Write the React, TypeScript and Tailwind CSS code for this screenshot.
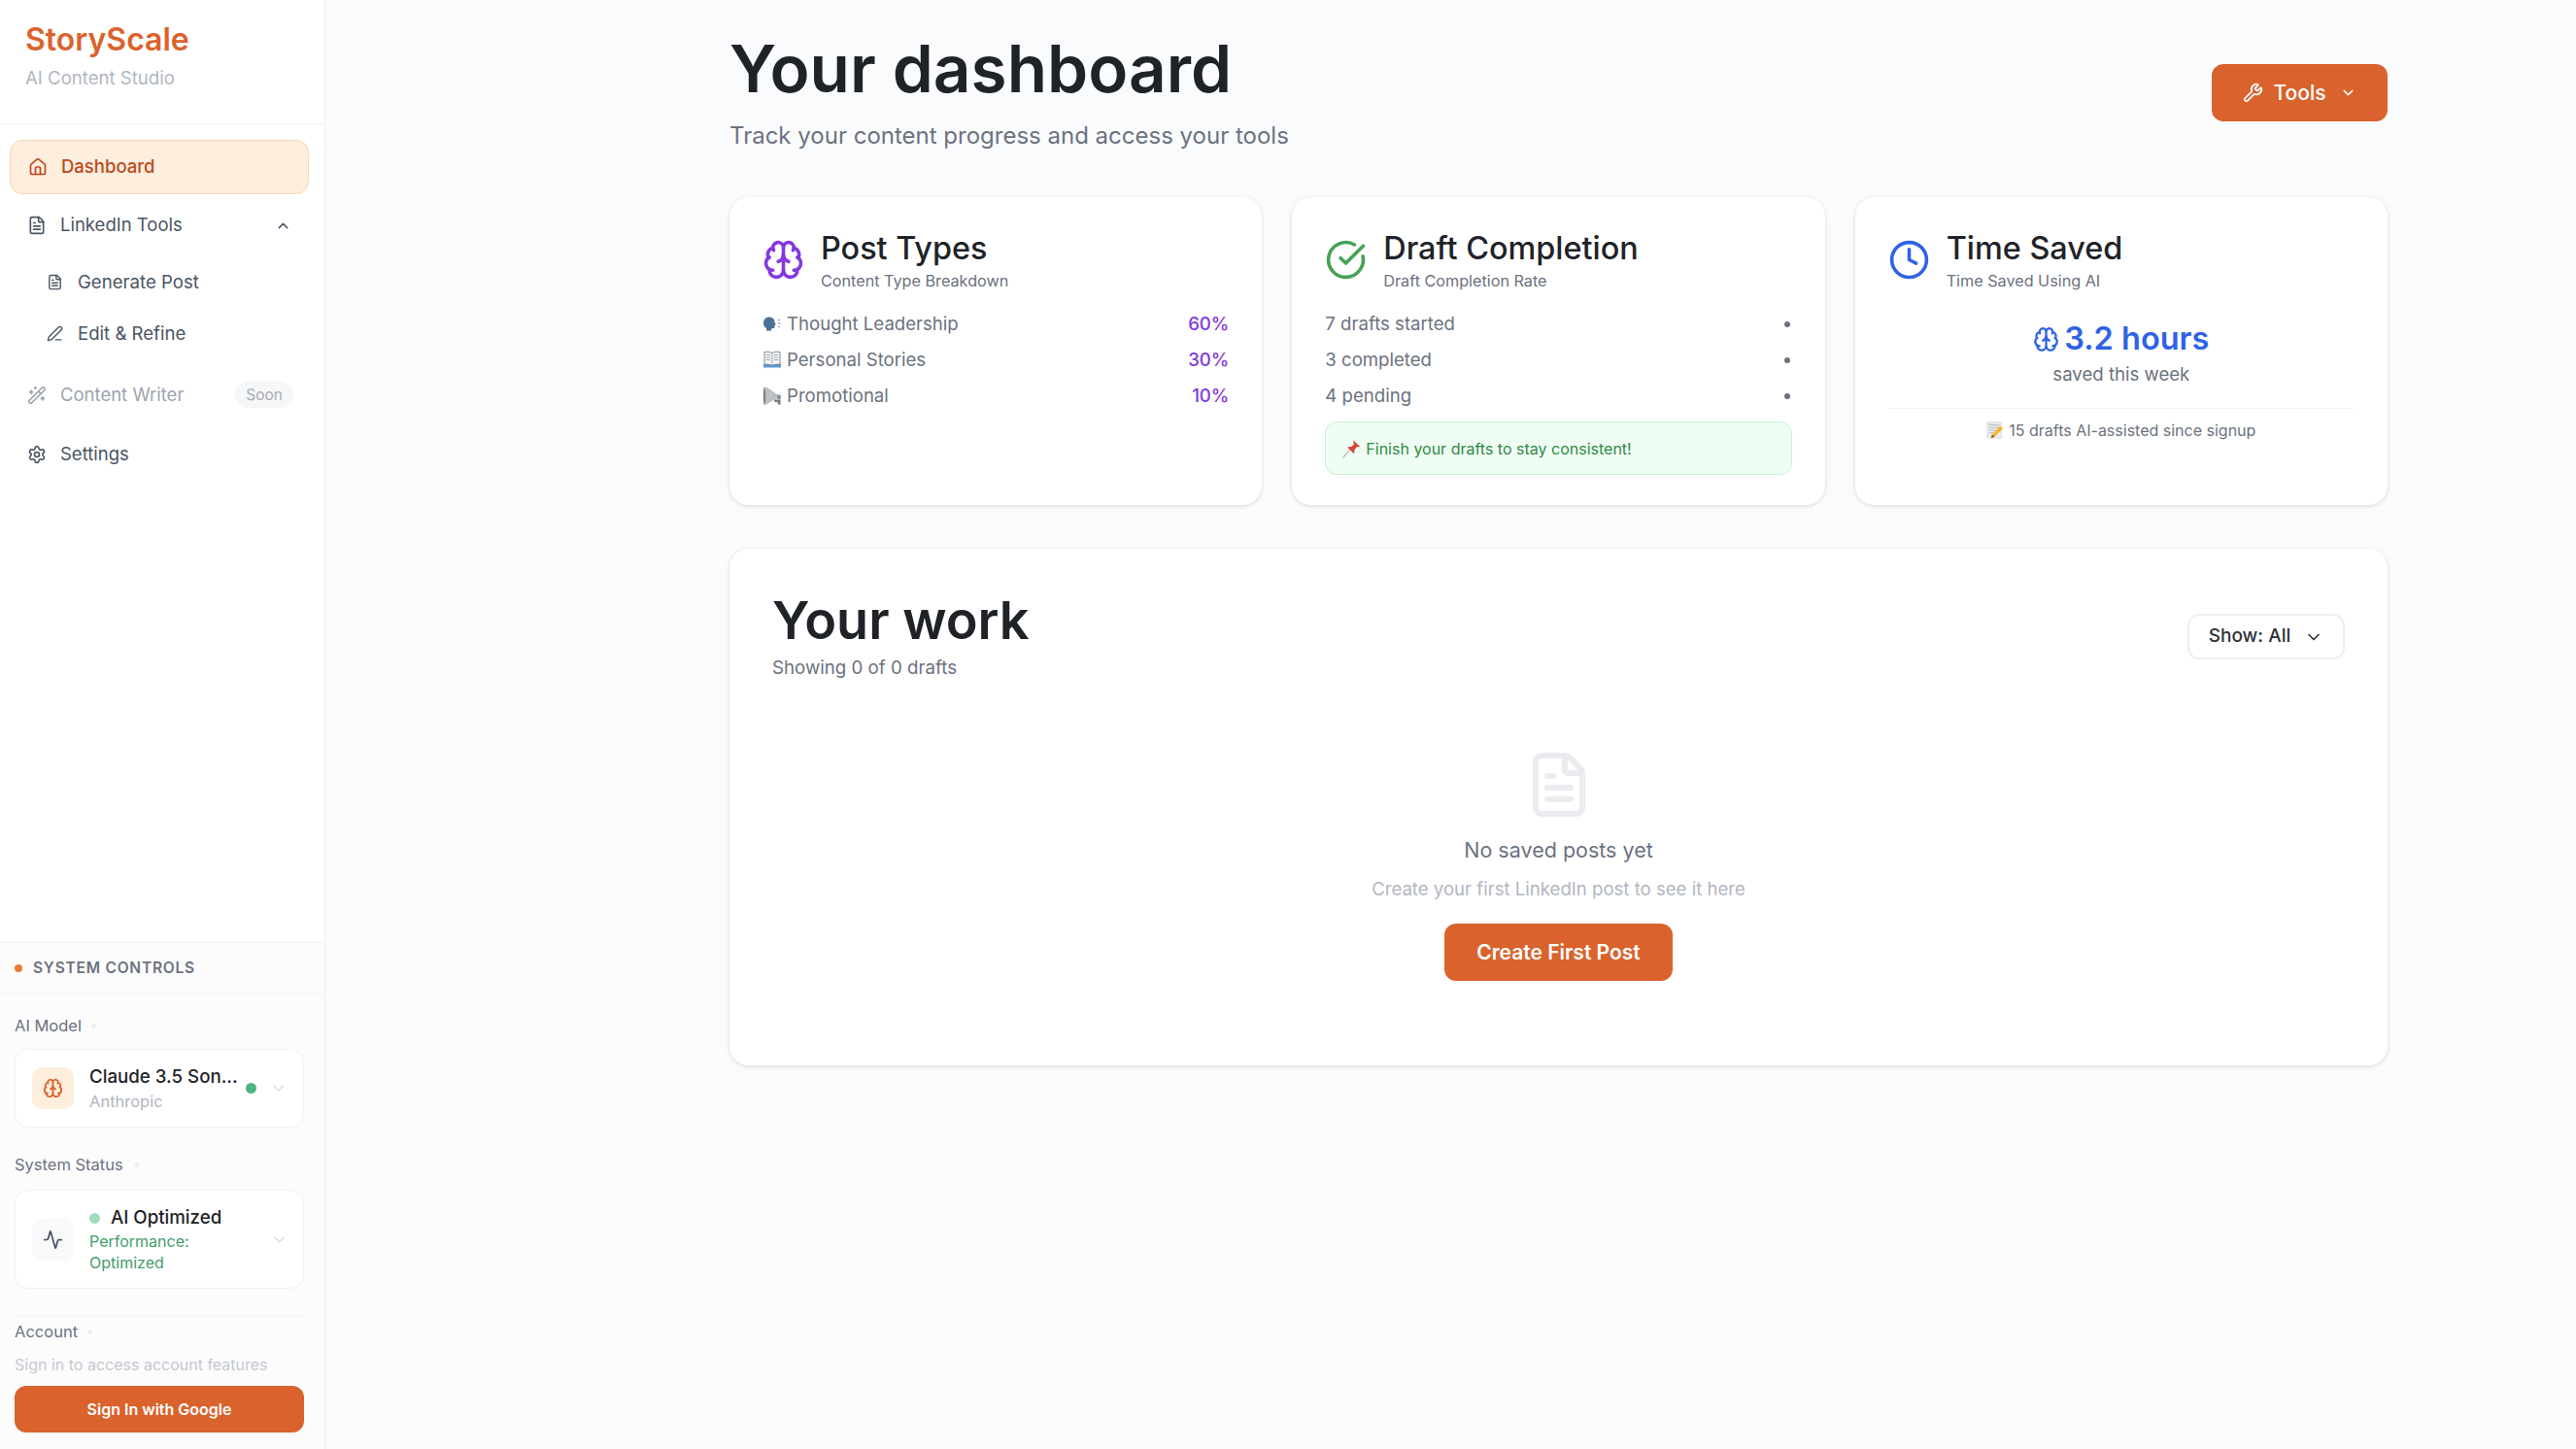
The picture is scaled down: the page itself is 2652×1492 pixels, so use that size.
import { Activity, Brain, ChevronDown, ChevronUp, CircleCheckBig, Clock, FileText, House, PenLine, Settings, WandSparkles, Wrench } from 'lucide-react'

function SpeakingHead() {
  return (
    <svg viewBox="0 0 20 20" className="w-[20px] h-[20px] shrink-0">
      <path d="M1 9.5C1 5.6 3.8 3.5 7 3.5c3.2 0 5.5 2.200 5.500 5.200l1.400 2.600-1.400.5v2c0 1-.8 1.400-1.700 1.400H9l.2 2.300H4V15C2 13.800 1 12 1 9.500Z" fill="#4d7196" />
      <path d="M16 7l1.600-1M16.300 10h2M16 13l1.600 1" stroke="#7d8c9c" strokeWidth="1" strokeLinecap="round" />
    </svg>
  )
}

function OpenBook() {
  return (
    <svg viewBox="0 0 20 20" className="w-[20px] h-[20px] shrink-0">
      <path d="M1 15h18v3.500H1z" fill="#5b9bd5" />
      <path d="M2 2.500c3-.6 6-.4 8 1 2-1.400 5-1.600 8-1V15.500c-3-.6-6-.4-8 1-2-1.400-5-1.600-8-1Z" fill="#f4f5f6" stroke="#5f6b78" strokeWidth=".8" />
      <path d="M10 3.500V16.500M3.800 5.500c1.500-.2 3-.1 4.400.4M3.800 8c1.500-.2 3-.1 4.400.4M3.800 10.500c1.500-.2 3-.1 4.400.4M11.800 5.900c1.400-.5 2.900-.6 4.400-.4M11.800 8.400c1.400-.5 2.900-.6 4.400-.4M11.800 10.900c1.400-.5 2.900-.6 4.400-.4" stroke="#7b8693" strokeWidth=".7" fill="none" />
    </svg>
  )
}

function Megaphone() {
  return (
    <svg viewBox="0 0 20 20" className="w-[20px] h-[21px] shrink-0">
      <path d="M1.500 1.500 4 1l11 7.500v4L3 19.500l-1.500-.5Z" fill="#bcbfc3" />
      <path d="M1.500 1.500C.5 5 .5 16 1.500 19c1.300-.5 1.800-4.500 1.800-8.500S2.700 2 1.500 1.500Z" fill="#7f8387" />
      <path d="M15 9h3l1 1.500v2l-1 1h-3Z" fill="#8d9196" />
      <path d="M12 14l6.500 0v5H16l-.5-2.500h-3Z" fill="#777b80" />
    </svg>
  )
}

function Pushpin() {
  return (
    <svg viewBox="0 0 20 20" className="w-[19px] h-[20px] shrink-0">
      <path d="M1 19.500l6.500-7.500" stroke="#8a8f95" strokeWidth="1" strokeLinecap="round" />
      <path d="M12 1l7 6.500-2 1-1.200-.7-3 3.700c.7 1.500.4 2.800-.6 3.800L5.500 8.700c1.100-1 2.500-1.200 3.900-.5l3.300-3.100-.7-1.300Z" fill="#d9443f" />
    </svg>
  )
}

function Memo() {
  return (
    <svg viewBox="0 0 20 20" className="w-[18px] h-[20px] shrink-0">
      <path d="M1 1h16v18H1z" fill="#eceded" stroke="#c4c6c8" strokeWidth=".6" />
      <path d="M3 4h12M3 7h12M3 10h8M3 13h5" stroke="#a8abae" strokeWidth=".9" />
      <path d="M15.500 5 19 8 9.500 17.500 5.500 19l1-4Z" fill="#f2b632" />
      <path d="M5.500 19l1-4 3 2.500Z" fill="#7a5b36" />
    </svg>
  )
}

function StatRow({ left, right, icon }: { left: string; right: React.ReactNode; icon?: React.ReactNode }) {
  return (
    <div className="flex items-center justify-between h-[37px] text-[18.6px] text-[#6b7280]">
      <span className="flex items-center gap-[5px]">
        {icon}
        {left}
      </span>
      {right}
    </div>
  )
}

function StatCard({ icon, title, sub, children }: { icon: React.ReactNode; title: string; sub: string; children: React.ReactNode }) {
  return (
    <div className="flex-1 h-[317px] bg-white rounded-[20px] px-[34px] pt-[30px] shadow-[0_1px_4px_rgba(0,0,0,0.14)]">
      <div className="flex items-start gap-[17px]">
        <div className="pt-[13px]">{icon}</div>
        <div>
          <div className="text-[32.4px] leading-[46px] font-medium text-[#1f2328]">{title}</div>
          <div className="text-[16.2px] leading-[21px] text-[#6b7280]">{sub}</div>
        </div>
      </div>
      <div className="mt-[15px]">{children}</div>
    </div>
  )
}

const Dot = () => <span className="w-[6px] h-[6px] rounded-full bg-[#6b7280] mr-[2px]" />
const Pct = ({ v }: { v: string }) => <span className="font-medium text-[#8338e0]">{v}</span>

export default function App() {
  return (
    <div className="flex h-screen w-full overflow-hidden bg-[#fafbfd] font-['Inter',sans-serif]">
      {/* Sidebar */}
      <aside className="w-[335px] shrink-0 h-full flex flex-col bg-white border-r border-[#f1f2f4]">
        <div className="h-[128px] shrink-0 border-b border-[#f1f2f4] pl-[26px] pt-[20px]">
          <div className="text-[32px] leading-[42px] font-semibold text-[#da622c]">StoryScale</div>
          <div className="mt-[3px] text-[18.6px] leading-[30px] text-[#b0b6bf]">AI Content Studio</div>
        </div>

        <nav className="flex-1 pt-[16px] pl-[10px] pr-[16px]">
          <div className="flex items-center h-[56px] pl-[18px] gap-[14px] rounded-[13px] bg-[#fdeedd] border border-[#fad7ae] text-[18.5px] font-medium text-[#bd4a1e]">
            <House size={20} />
            <span>Dashboard</span>
          </div>
          <div className="flex items-center justify-between h-[60px] mt-[2px] pl-[18px] pr-[18px] text-[18.5px] text-[#4b5563]">
            <span className="flex items-center gap-[14px]">
              <FileText size={20} />
              LinkedIn Tools
            </span>
            <ChevronUp size={17} />
          </div>
          <div className="flex items-center h-[53px] mt-[2px] pl-[38px] gap-[15px] text-[18.6px] text-[#4b5563]">
            <FileText size={17} />
            <span>Generate Post</span>
          </div>
          <div className="flex items-center h-[53px] pl-[38px] gap-[15px] text-[18.6px] text-[#4b5563]">
            <PenLine size={17} />
            <span>Edit &amp; Refine</span>
          </div>
          <div className="flex items-center justify-between h-[63px] mt-[5px] pl-[18px] pr-[16px] text-[18.5px] text-[#9ca3af]">
            <span className="flex items-center gap-[14px]">
              <WandSparkles size={20} />
              Content Writer
            </span>
            <span className="h-[27px] px-[11px] flex items-center rounded-full bg-[#f6f7f8] text-[15.5px] text-[#a6acb5]">Soon</span>
          </div>
          <div className="flex items-center h-[55px] mt-[2px] pl-[18px] gap-[14px] text-[18.5px] text-[#4b5563]">
            <Settings size={20} />
            <span>Settings</span>
          </div>
        </nav>

        {/* System controls */}
        <div className="shrink-0 h-[522px] bg-[#fcfcfd] border-t border-[#f1f2f4]">
          <div className="h-[53px] flex items-center gap-[11px] pl-[15px] border-b border-[#f3f4f6]">
            <span className="w-[8px] h-[8px] rounded-full bg-[#ee7a35]" />
            <span className="text-[15.5px] font-semibold tracking-[0.05em] text-[#6b7280]">SYSTEM CONTROLS</span>
          </div>
          <div className="px-[15px] pr-[21px]">
            <div className="flex items-center gap-[10px] h-[24px] mt-[20px] text-[16.5px] text-[#6b7280]">
              AI Model <span className="w-[5px] h-[5px] rounded-full bg-[#eceef1]" />
            </div>
            <div className="flex items-center h-[81px] mt-[12px] pl-[17px] pr-[15px] bg-white rounded-[14px] border border-[#f1f2f4]">
              <div className="w-[43px] h-[43px] rounded-[10px] bg-[#fdeedd] flex items-center justify-center text-[#da622c]">
                <Brain size={21} />
              </div>
              <div className="ml-[16px] w-[155px] shrink-0">
                <div className="text-[18.7px] leading-[26px] font-medium text-[#1f2328] whitespace-nowrap">Claude 3.5 Son...</div>
                <div className="text-[16.5px] leading-[24px] text-[#b0b6bf]">Anthropic</div>
              </div>
              <span className="w-[11px] h-[11px] rounded-full bg-[#4fb584] ml-[6px] mr-[13px]" />
              <ChevronDown size={19} strokeWidth={1.5} className="text-[#d1d5db]" />
            </div>

            <div className="flex items-center gap-[11px] h-[24px] mt-[26px] text-[16.5px] text-[#6b7280]">
              System Status <span className="w-[5px] h-[5px] rounded-full bg-[#eceef1]" />
            </div>
            <div className="flex items-center h-[102px] mt-[14px] pl-[17px] pr-[15px] bg-white rounded-[14px] border border-[#f1f2f4]">
              <div className="w-[43px] h-[43px] rounded-[10px] bg-[#f8f9fb] flex items-center justify-center text-[#4b5563]">
                <Activity size={21} />
              </div>
              <div className="ml-[16px] flex-1 min-w-0">
                <div className="flex items-center gap-[11px] text-[18.7px] leading-[26px] font-medium text-[#1f2328]">
                  <span className="w-[11px] h-[11px] rounded-full bg-[#a0dcbd]" />
                  AI Optimized
                </div>
                <div className="w-[140px] text-[16px] leading-[22px] text-[#3f9e6b]">Performance: Optimized</div>
              </div>
              <ChevronDown size={19} strokeWidth={1.5} className="text-[#d1d5db]" />
            </div>

            <div className="border-t border-[#f3f4f6] mt-[28px] pt-[3px]">
              <div className="flex items-center gap-[10px] h-[24px] text-[16.5px] text-[#6b7280]">
                Account <span className="w-[5px] h-[5px] rounded-full bg-[#eceef1]" />
              </div>
              <div className="mt-[10px] text-[16px] leading-[24px] text-[#c3c8cf]">Sign in to access account features</div>
              <button className="w-full h-[48px] mt-[10px] rounded-[12px] bg-[#da622c] text-white text-[16px] font-semibold">Sign In with Google</button>
            </div>
          </div>
        </div>
      </aside>

      {/* Main */}
      <main className="flex-1 min-w-0 pl-[416px] pr-[194px]">
        <header className="flex items-start justify-between h-[203px]">
          <div className="pt-[28px]">
            <h1 className="text-[67.5px] leading-[86px] font-semibold text-[#1f2328]">Your dashboard</h1>
            <p className="mt-[8px] text-[24px] leading-[36px] text-[#6b7280]">Track your content progress and access your tools</p>
          </div>
          <button className="mt-[66px] h-[59px] w-[181px] flex items-center justify-center gap-[10px] rounded-[12px] bg-[#da622c] text-white text-[21px] font-medium">
            <Wrench size={21} />
            Tools
            <ChevronDown size={17} className="ml-[4px]" />
          </button>
        </header>

        <section className="flex gap-[31px]">
          <StatCard icon={<Brain size={43} className="text-[#8338e0]" />} title="Post Types" sub="Content Type Breakdown">
            <StatRow icon={<SpeakingHead />} left="Thought Leadership" right={<Pct v="60%" />} />
            <StatRow icon={<OpenBook />} left="Personal Stories" right={<Pct v="30%" />} />
            <StatRow icon={<Megaphone />} left="Promotional" right={<Pct v="10%" />} />
          </StatCard>

          <StatCard icon={<CircleCheckBig size={43} className="text-[#45a352]" />} title="Draft Completion" sub="Draft Completion Rate">
            <StatRow left="7 drafts started" right={<Dot />} />
            <StatRow left="3 completed" right={<Dot />} />
            <StatRow left="4 pending" right={<Dot />} />
            <div className="flex items-center gap-[5px] h-[55px] mt-[8px] pl-[17px] rounded-[12px] bg-[#f0fdf4] border border-[#c4f2d2] text-[16px] text-[#2f8a45]">
              <Pushpin />
              Finish your drafts to stay consistent!
            </div>
          </StatCard>

          <StatCard icon={<Clock size={43} className="text-[#2f62e6]" />} title="Time Saved" sub="Time Saved Using AI">
            <div className="flex flex-col items-center pt-[12px]">
              <div className="flex items-center gap-[5px] text-[32.5px] leading-[44px] font-semibold text-[#2f62e6]">
                <Brain size={27} />
                3.2 hours
              </div>
              <div className="text-[18.6px] leading-[28px] text-[#6b7280]">saved this week</div>
            </div>
            <div className="border-t border-[#f3f4f6] mt-[21px] flex items-center justify-center gap-[5px] h-[44px] text-[16px] text-[#6b7280]">
              <Memo />
              15 drafts AI-assisted since signup
            </div>
          </StatCard>
        </section>

        <section className="mt-[45px] h-[532px] bg-white rounded-[20px] px-[44px] shadow-[0_1px_4px_rgba(0,0,0,0.14)]">
          <div className="flex items-start justify-between pt-[40px]">
            <div>
              <h2 className="text-[54px] leading-[68px] font-semibold text-[#1f2328]">Your work</h2>
              <p className="text-[18.7px] leading-[30px] text-[#6b7280]">Showing 0 of 0 drafts</p>
            </div>
            <button className="mt-[27px] h-[47px] w-[162px] flex items-center justify-center gap-[14px] rounded-[12px] bg-white border-2 border-[#eeeef2] text-[19px] font-medium text-[#2d3138]">
              Show: All
              <ChevronDown size={20} />
            </button>
          </div>
          <div className="flex flex-col items-center mt-[69px]">
            <FileText size={72} className="text-[#eaecf0]" />
            <div className="mt-[15px] text-[21.5px] leading-[32px] text-[#6b7280]">No saved posts yet</div>
            <div className="mt-[9px] text-[18.6px] leading-[30px] text-[#b0b6bf]">Create your first LinkedIn post to see it here</div>
            <button className="mt-[21px] h-[59px] w-[235px] rounded-[12px] bg-[#da622c] text-white text-[21px] font-semibold">Create First Post</button>
          </div>
        </section>
      </main>
    </div>
  )
}
